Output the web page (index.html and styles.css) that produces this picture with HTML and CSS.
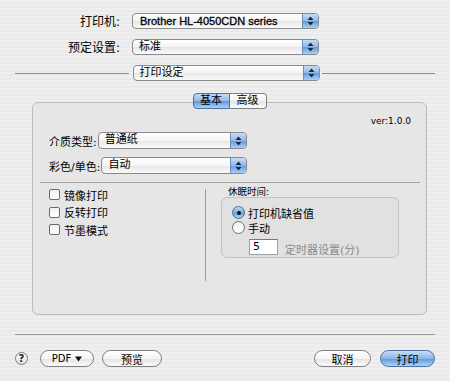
FILE: index.html
```html
<!DOCTYPE html>
<html>
<head>
    <title>打印</title>
    <link rel="stylesheet" href="styles.css">
</head>
<body>
    <div class="sheet">
        <div class="field-row">
            <span class="field-label">打印机:</span>
            <div class="popup wide"><span class="popup-text latin">Brother HL-4050CDN series</span><span class="popup-arrows"><svg width="7" height="10" viewBox="0 0 7 10"><path d="M3.5 0.5 L6.5 4 L0.5 4 Z M3.5 9.5 L6.5 6 L0.5 6 Z" fill="#1c2a3a"/></svg></span></div>
        </div>
        <div class="field-row">
            <span class="field-label">预定设置:</span>
            <div class="popup wide"><span class="popup-text">标准</span><span class="popup-arrows"><svg width="7" height="10" viewBox="0 0 7 10"><path d="M3.5 0.5 L6.5 4 L0.5 4 Z M3.5 9.5 L6.5 6 L0.5 6 Z" fill="#1c2a3a"/></svg></span></div>
        </div>
        <div class="pane-row">
            <span class="rule left"></span>
            <div class="popup wide"><span class="popup-text">打印设定</span><span class="popup-arrows"><svg width="7" height="10" viewBox="0 0 7 10"><path d="M3.5 0.5 L6.5 4 L0.5 4 Z M3.5 9.5 L6.5 6 L0.5 6 Z" fill="#1c2a3a"/></svg></span></div>
            <span class="rule right"></span>
        </div>

        <div class="tabs">
            <span class="tab selected">基本</span><span class="tab">高级</span>
        </div>
        <div class="group">
            <div class="version">ver:1.0.0</div>
            <div class="media-row">
                <span class="media-label">介质类型:</span>
                <div class="popup"><span class="popup-text">普通纸</span><span class="popup-arrows"><svg width="7" height="10" viewBox="0 0 7 10"><path d="M3.5 0.5 L6.5 4 L0.5 4 Z M3.5 9.5 L6.5 6 L0.5 6 Z" fill="#1c2a3a"/></svg></span></div>
            </div>
            <div class="media-row second">
                <span class="media-label">彩色/单色:</span>
                <div class="popup"><span class="popup-text">自动</span><span class="popup-arrows"><svg width="7" height="10" viewBox="0 0 7 10"><path d="M3.5 0.5 L6.5 4 L0.5 4 Z M3.5 9.5 L6.5 6 L0.5 6 Z" fill="#1c2a3a"/></svg></span></div>
            </div>
            <div class="group-sep"></div>
            <div class="lower">
                <div class="checks">
                    <label class="check"><span class="box"></span>镜像打印</label>
                    <label class="check"><span class="box"></span>反转打印</label>
                    <label class="check"><span class="box"></span>节墨模式</label>
                </div>
                <div class="divider"></div>
                <div class="sleep">
                    <div class="sleep-title">休眠时间:</div>
                    <div class="sleep-box">
                        <div class="radio-row"><span class="radio on"><span class="dot"></span></span>打印机缺省值</div>
                        <div class="radio-row"><span class="radio"></span>手动</div>
                        <div class="timer-row">
                            <span class="timer-input">5</span>
                            <span class="timer-label">定时器设置(分)</span>
                        </div>
                    </div>
                </div>
            </div>
        </div>

        <div class="bottom-rule"></div>
        <div class="buttons">
            <div class="btn-group">
                <span class="help">?</span>
                <span class="btn pdf">PDF <svg width="7" height="6" viewBox="0 0 7 6"><path d="M0 0.5 L7 0.5 L3.5 5.5 Z" fill="#111"/></svg></span>
                <span class="btn preview">预览</span>
            </div>
            <div class="btn-group">
                <span class="btn cancel">取消</span>
                <span class="btn primary">打印</span>
            </div>
        </div>
    </div>
</body>
</html>
```

FILE: styles.css
```css
body {
    margin: 0;
    width: 450px;
    height: 381px;
    overflow: hidden;
    background: repeating-linear-gradient(#efefef 0 2px, #eaeaea 2px 4px);
    font-family: "DejaVu Sans", "Noto Sans CJK SC", sans-serif;
    font-size: 11px;
    color: #000;
}
.sheet {
    padding-top: 12px;
}
.field-row {
    display: flex;
    align-items: center;
    margin-bottom: 9px;
}
.field-label {
    width: 120px;
    margin-right: 12px;
    text-align: right;
    font-size: 12px;
}

/* aqua style popup button */
.popup {
    display: flex;
    height: 16px;
    box-sizing: border-box;
    border: 1px solid #8a8a8a;
    border-radius: 4px;
    background: linear-gradient(#ffffff, #f4f4f4 50%, #e6e6e6 51%, #fafafa);
    overflow: hidden;
}
.popup.wide {
    width: 187px;
}
.popup-text {
    flex: 1;
    padding-left: 6px;
    line-height: 14px;
    white-space: nowrap;
}
.latin {
    font-family: "Liberation Sans", "Noto Sans CJK SC", sans-serif;
    font-size: 11px;
    padding-left: 7px;
    -webkit-text-stroke: 0.3px #000;
}
.popup-arrows {
    width: 15px;
    display: flex;
    align-items: center;
    justify-content: center;
    border-left: 1px solid #6d8fb6;
    background: linear-gradient(#c4dcf6, #8fb9ea 50%, #5f9ae0 51%, #a9d0f7);
}
.pane-row {
    display: flex;
    align-items: center;
    padding: 0 15px;
    margin-top: 10px;
}
.rule {
    flex: 1;
    height: 1px;
    background: #8e8e8e;
}
.rule.left {
    margin-right: 4px;
}
.rule.right {
    margin-left: 2px;
}

/* tab control */
.tabs {
    position: relative;
    z-index: 1;
    display: flex;
    justify-content: center;
    margin: 12px 0 -7px 9px;
}
.tab {
    width: 37px;
    height: 16px;
    box-sizing: border-box;
    border: 1px solid #808080;
    text-align: center;
    line-height: 14px;
    background: linear-gradient(#ffffff, #f3f3f3 50%, #e4e4e4 51%, #fbfbfb);
}
.tab.selected {
    border-radius: 4px 0 0 4px;
    border-color: #51719a;
    background: linear-gradient(#c4dcf6, #8fb9ea 50%, #5f9ae0 51%, #a9d0f7);
}
.tab + .tab {
    border-left: none;
    border-radius: 0 4px 4px 0;
}
.group {
    width: 395px;
    height: 213px;
    margin-left: 32px;
    box-sizing: border-box;
    border: 1px solid #bcbcbc;
    border-radius: 6px;
    background: #e6e6e6;
    padding: 12px 15px 0 16px;
}
.version {
    text-align: right;
    font-size: 9px;
    line-height: 12px;
}
.media-row {
    display: flex;
    align-items: center;
    width: 198px;
    margin-top: 5px;
}
.media-row.second {
    margin-top: 8px;
}
.media-row .popup {
    flex: 1;
    height: 17px;
}
.media-label {
    margin-right: 1px;
    font-size: 11px;
}
.group-sep {
    height: 1px;
    background: #a5a5a5;
    margin: 8px -9px 0 -9px;
}
.lower {
    display: grid;
    grid-template-columns: 156px 1px 1fr;
    margin-top: 3px;
}
.checks {
    display: flex;
    flex-direction: column;
}
.check {
    display: flex;
    align-items: center;
    height: 17.5px;
}
.box {
    width: 9px;
    height: 9px;
    margin-right: 4px;
    border: 1px solid #6b6b6b;
    border-radius: 2px;
    background: linear-gradient(#f2f2f2, #ffffff);
}
.divider {
    margin-top: 3px;
    height: 92px;
    background: #9c9c9c;
}
.sleep {
    padding-left: 15px;
}
.sleep-title {
    font-size: 9.5px;
    line-height: 11px;
    padding-left: 7px;
}
.sleep-box {
    width: 178px;
    height: 61px;
    box-sizing: border-box;
    border: 1px solid #c2c2c2;
    border-radius: 6px;
    background: #e1e1e1;
    padding: 7px 0 0 10px;
}
.radio-row {
    display: flex;
    align-items: center;
    height: 15px;
}
.radio {
    width: 11px;
    height: 11px;
    margin-right: 3px;
    border: 1px solid #6f6f6f;
    border-radius: 50%;
    background: linear-gradient(#f0f0f0, #ffffff);
    display: flex;
    align-items: center;
    justify-content: center;
}
.radio.on {
    border-color: #4a6c98;
    background: linear-gradient(#c4dcf6, #79a9e4 50%, #5f9ae0 51%, #b2d4f8);
}
.dot {
    width: 4px;
    height: 4px;
    border-radius: 50%;
    background: #111;
}
.timer-row {
    display: flex;
    align-items: center;
    margin: 2px 0 0 17px;
}
.timer-input {
    width: 29px;
    height: 16px;
    box-sizing: border-box;
    border: 1px solid #a0a0a0;
    border-top-color: #777;
    background: #fff;
    padding-left: 3px;
    line-height: 13px;
    font-size: 11px;
}
.timer-label {
    margin-left: 7px;
    margin-top: 4px;
    color: #8a8a8a;
}
.bottom-rule {
    height: 1px;
    background: #9a9a9a;
    margin: 19px 15px 0 15px;
}
.buttons {
    display: flex;
    justify-content: space-between;
    padding: 0 15px;
    margin-top: 15px;
}
.btn-group {
    display: flex;
    align-items: center;
    gap: 8px;
}
.help {
    width: 13px;
    height: 13px;
    box-sizing: border-box;
    border: 1px solid #7a7a7a;
    border-radius: 50%;
    background: linear-gradient(#ffffff, #e2e2e2);
    font-size: 10px;
    font-weight: bold;
    line-height: 11px;
    text-align: center;
    margin-right: 4px;
    color: #222;
}
.btn {
    display: flex;
    align-items: center;
    justify-content: center;
    gap: 4px;
    height: 17px;
    box-sizing: border-box;
    border: 1px solid #7d7d7d;
    border-radius: 9px;
    background: linear-gradient(#ffffff, #f4f4f4 50%, #e3e3e3 51%, #fbfbfb);
}
.pdf {
    width: 54px;
    font-size: 10px;
}
.preview {
    width: 60px;
}
.cancel {
    width: 57px;
}
.btn-group .cancel {
    margin-right: 1px;
}
.primary {
    width: 55px;
    border-color: #4e6f9c;
    background: linear-gradient(#c6defa, #8ab6ea 50%, #5a97e0 51%, #aed3f9);
}
```
